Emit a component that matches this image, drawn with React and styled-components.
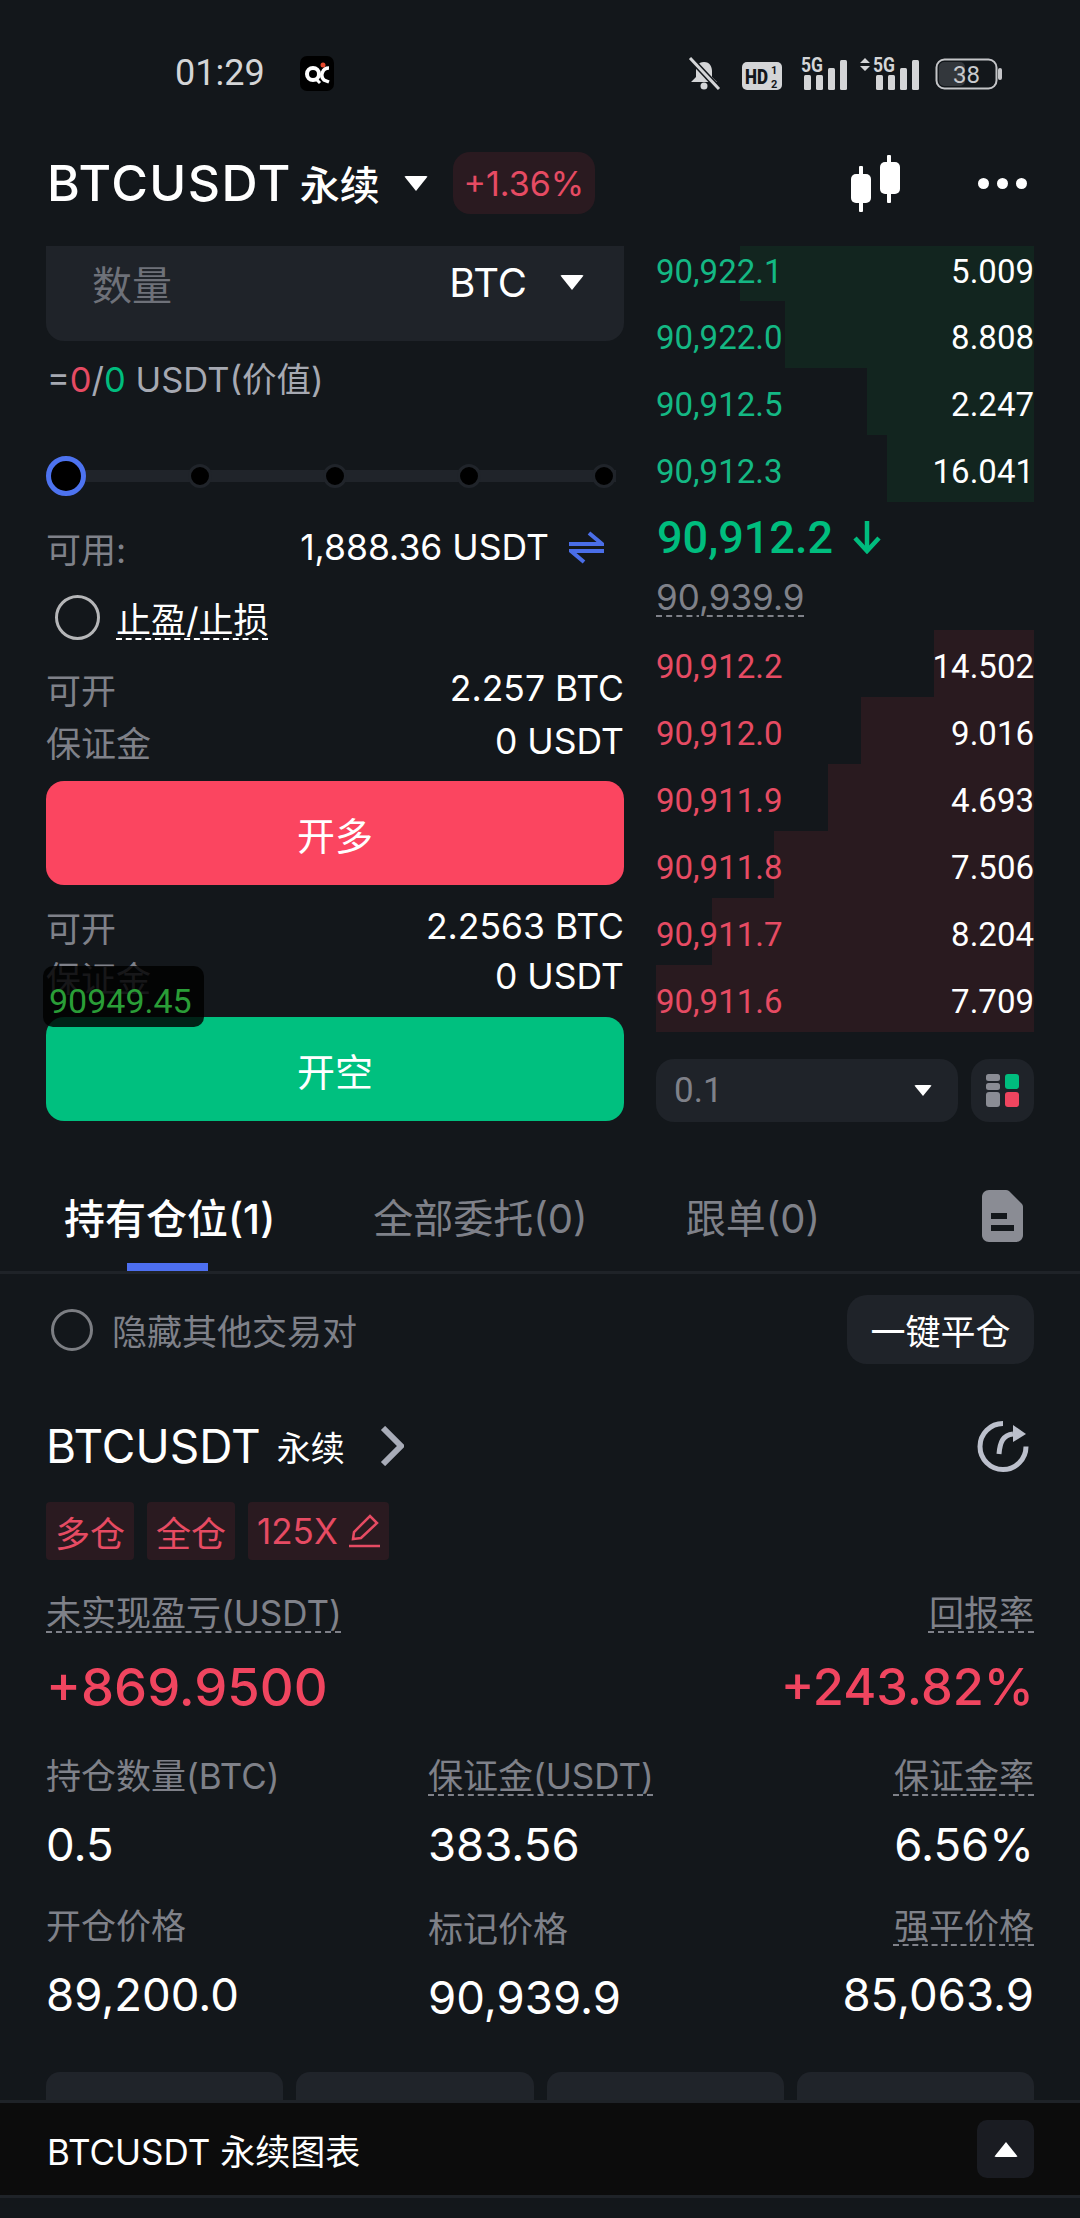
import React from "react";
import styled, { createGlobalStyle } from "styled-components";

const RED = "#f0455f";
const BOOK_RED = "#e64b63";
const GREEN = "#00bd7e";
const GREY = "#7f8189";
const PANEL = "#1f2329";
const BG = "#13171b";

const asks = [
  { price: "90,922.1", qty: "5.009", left: 84 },
  { price: "90,922.0", qty: "8.808", left: 129 },
  { price: "90,912.5", qty: "2.247", left: 211 },
  { price: "90,912.3", qty: "16.041", left: 231 },
];

const bids = [
  { price: "90,912.2", qty: "14.502", left: 278 },
  { price: "90,912.0", qty: "9.016", left: 205 },
  { price: "90,911.9", qty: "4.693", left: 172 },
  { price: "90,911.8", qty: "7.506", left: 118 },
  { price: "90,911.7", qty: "8.204", left: 56 },
  { price: "90,911.6", qty: "7.709", left: 0 },
];

const metrics = [
  [
    { label: "持仓数量(BTC)", value: "0.5" },
    { label: "保证金(USDT)", value: "383.56", dashed: true },
    { label: "保证金率", value: "6.56%", dashed: true },
  ],
  [
    { label: "开仓价格", value: "89,200.0" },
    { label: "标记价格", value: "90,939.9", low: true },
    { label: "强平价格", value: "85,063.9", dashed: true },
  ],
];

const GlobalStyle = createGlobalStyle`
  html, body {
    margin: 0;
    padding: 0;
    background: ${BG};
  }
  * {
    box-sizing: border-box;
  }
  body {
    font-family: Inter, "Noto Sans CJK SC", sans-serif;
  }
`;

const Page = styled.div`
  width: 1080px;
  height: 2218px;
  background: ${BG};
  color: #fff;
  display: flex;
  flex-direction: column;
  overflow: hidden;
`;

const Content = styled.div`
  flex: 1;
  min-height: 0;
  overflow: hidden;
`;

const StatusBar = styled.div`
  height: 146px;
  padding: 0 78px 0 175px;
  display: flex;
  align-items: center;
`;

const Clock = styled.span`
  font-family: Roboto, sans-serif;
  font-size: 36px;
  color: #d4d5d7;
  width: 125px;
`;

const StatusIcons = styled.div`
  margin-left: auto;
  display: flex;
  align-items: flex-end;
  height: 33px;
`;

const StatusIcon = styled.svg`
  display: block;
  margin-left: ${(p) => p.$gap}px;
`;

const Header = styled.div`
  height: 74px;
  margin-bottom: 26px;
  padding: 0 53px 0 47px;
  display: flex;
  align-items: center;
`;

const Symbol = styled.span`
  font-size: 50px;
  font-weight: 500;
  letter-spacing: 1.5px;
`;

const SymbolKind = styled.span`
  font-size: 40px;
  font-weight: 500;
  margin-left: 8px;
`;

const Caret = styled.span`
  display: inline-block;
  width: 0;
  height: 0;
  border-left: ${(p) => p.$size}px solid transparent;
  border-right: ${(p) => p.$size}px solid transparent;
  border-top: ${(p) => Math.round(p.$size * 1.25)}px solid #fff;
  border-radius: 2px;
`;

const HeaderCaret = styled(Caret)`
  margin-left: 24px;
`;

const ChangePill = styled.span`
  margin-left: 25px;
  width: 142px;
  height: 62px;
  border-radius: 17px;
  background: #2a1a20;
  color: ${BOOK_RED};
  font-size: 34px;
  display: flex;
  align-items: center;
  justify-content: center;
`;

const HeaderTools = styled.div`
  margin-left: auto;
  display: flex;
  align-items: center;
  gap: 76px;
`;

const Dots = styled.div`
  display: flex;
  gap: 8px;
`;

const Dot = styled.span`
  width: 11px;
  height: 11px;
  border-radius: 50%;
  background: #fff;
`;

const TradeArea = styled.div`
  padding: 0 46px;
  display: grid;
  grid-template-columns: 578px 378px;
  gap: 32px;
`;

const LeftCol = styled.div`
  display: flex;
  flex-direction: column;
`;

const QtyInput = styled.div`
  height: 95px;
  background: ${PANEL};
  border-radius: 0 0 18px 18px;
  padding: 0 40px 22px 46px;
  display: flex;
  align-items: center;
  justify-content: space-between;
`;

const QtyLabel = styled.span`
  font-size: 40px;
  color: #6e7179;
`;

const QtyUnit = styled.span`
  font-size: 40px;
  display: flex;
  align-items: center;
  gap: 33px;
`;

const ValueLine = styled.div`
  margin-top: 19px;
  height: 40px;
  padding-left: 1px;
  font-size: 34.5px;
  line-height: 40px;
  color: #a6a9b2;
`;

const Tinted = styled.span`
  color: ${(p) => p.$color};
`;

const SliderWrap = styled.div`
  margin-top: 56px;
  height: 40px;
  position: relative;
  display: flex;
  align-items: center;
  justify-content: space-between;
`;

const SliderTrack = styled.div`
  position: absolute;
  left: 20px;
  right: 8px;
  top: 14px;
  height: 12px;
  background: #20242a;
`;

const SliderThumb = styled.span`
  position: relative;
  width: 40px;
  height: 40px;
  border-radius: 50%;
  background: #000;
  border: 5px solid #4d73f0;
`;

const SliderStop = styled.span`
  position: relative;
  width: 24px;
  height: 24px;
  border-radius: 50%;
  background: #000;
  border: 3px solid #20242a;
`;

const SliderStops = styled.div`
  position: absolute;
  left: 142px;
  right: 8px;
  top: 8px;
  display: flex;
  justify-content: space-between;
`;

const AvailableRow = styled.div`
  margin-top: 29px;
  height: 44px;
  display: flex;
  align-items: center;
`;

const MutedLabel = styled.span`
  font-size: 35px;
  color: ${GREY};
`;

const AvailableValue = styled.span`
  margin-left: auto;
  font-size: 35.5px;
`;

const SwapIcon = styled.svg`
  margin: 0 20px 0 20px;
  flex: none;
`;

const StopRow = styled.div`
  margin-top: 26px;
  height: 45px;
  padding-left: 9px;
  display: flex;
  align-items: center;
  gap: 16px;
`;

const Radio = styled.span`
  width: ${(p) => p.$size}px;
  height: ${(p) => p.$size}px;
  border-radius: 50%;
  border: 3px solid ${(p) => p.$color};
  flex: none;
`;

const DashedText = styled.span`
  text-decoration: underline dashed;
  text-decoration-thickness: 2px;
  text-underline-offset: 5px;
`;

const StopLink = styled(DashedText)`
  font-size: 35px;
`;

const Summary = styled.div`
  position: relative;
  margin-top: ${(p) => p.$top}px;
`;

const SummaryRow = styled.div`
  height: ${(p) => p.$height}px;
  padding-bottom: 2px;
  display: flex;
  align-items: center;
  justify-content: space-between;
`;

const SummaryValue = styled.span`
  font-size: 35.5px;
`;

const PriceBadge = styled.div`
  position: absolute;
  left: -3px;
  top: 64px;
  width: 161px;
  height: 61px;
  padding: 0 0 6px 6px;
  border-radius: 10px;
  background: rgba(0, 0, 0, 0.82);
  color: #2a9d37;
  font-family: Roboto, sans-serif;
  font-size: 34px;
  display: flex;
  align-items: flex-end;
  z-index: 2;
`;

const ActionButton = styled.div`
  height: 104px;
  margin-top: ${(p) => p.$top}px;
  border-radius: 18px;
  background: ${(p) => p.$color};
  font-size: 38px;
  display: flex;
  align-items: center;
  justify-content: center;
`;

const RightCol = styled.div`
  display: flex;
  flex-direction: column;
  font-family: Roboto, sans-serif;
`;

const BookRow = styled.div`
  position: relative;
  height: ${(p) => (p.$clipped ? 55 : 67)}px;
  padding-top: ${(p) => (p.$clipped ? 0 : 6)}px;
  padding-bottom: ${(p) => (p.$clipped ? 5 : 0)}px;
  display: flex;
  align-items: center;
  justify-content: space-between;
  font-size: 33px;
`;

const BookFill = styled.div`
  position: absolute;
  top: 0;
  bottom: 0;
  right: 0;
  left: ${(p) => p.$left}px;
  background: ${(p) => p.$color};
`;

const BookPrice = styled.span`
  position: relative;
  color: ${(p) => p.$color};
`;

const BookQty = styled.span`
  position: relative;
`;

const LastPrice = styled.div`
  height: 70px;
  padding-left: 1px;
  display: flex;
  align-items: center;
  gap: 20px;
  font-size: 45px;
  font-weight: 500;
  color: ${GREEN};
`;

const MarkPrice = styled.div`
  height: 50px;
  margin-bottom: 8px;
  display: flex;
  align-items: center;
  font-family: Inter, sans-serif;
  font-size: 35px;
  color: ${GREY};
`;

const BookFooter = styled.div`
  margin-top: 27px;
  display: flex;
  gap: 13px;
`;

const StepSelect = styled.div`
  width: 302px;
  height: 63px;
  border-radius: 18px;
  background: ${PANEL};
  padding: 0 26px 0 18px;
  display: flex;
  align-items: center;
  justify-content: space-between;
  font-size: 35px;
  color: ${GREY};
`;

const DepthButton = styled.div`
  width: 63px;
  height: 63px;
  border-radius: 18px;
  background: ${PANEL};
  display: flex;
  align-items: center;
  justify-content: center;
`;

const TabBar = styled.div`
  height: 152px;
  padding: 62px 57px 0 64px;
  border-bottom: 3px solid #1f2328;
  display: flex;
  gap: 98px;
`;

const Tab = styled.div`
  position: relative;
  height: 87px;
  display: flex;
  align-items: center;
  padding-bottom: 24px;
  font-size: ${(p) => (p.$active ? 41 : 40)}px;
  font-weight: ${(p) => (p.$active ? 500 : 400)};
  color: ${(p) => (p.$active ? "#fff" : GREY)};
`;

const TabMark = styled.span`
  position: absolute;
  left: 63px;
  bottom: 0;
  width: 81px;
  height: 8px;
  background: #4d6ff0;
`;

const DocIcon = styled.svg`
  margin: 6px 0 0 auto;
`;

const Positions = styled.div`
  padding: 21px 46px 0;
`;

const HideRow = styled.div`
  height: 69px;
  display: flex;
  align-items: center;
  padding-left: 5px;
`;

const HideLabel = styled.span`
  margin-left: 19px;
  font-size: 35px;
  color: ${GREY};
`;

const CloseAll = styled.div`
  margin-left: auto;
  width: 187px;
  height: 69px;
  border-radius: 20px;
  background: ${PANEL};
  font-size: 35px;
  display: flex;
  align-items: center;
  justify-content: center;
`;

const PositionTitle = styled.div`
  margin-top: 52px;
  height: 60px;
  display: flex;
  align-items: center;
`;

const PositionSymbol = styled.span`
  font-size: 46px;
`;

const PositionKind = styled.span`
  margin-left: 16px;
  font-size: 34px;
`;

const Chevron = styled.svg`
  margin-left: 35px;
`;

const ShareIcon = styled.svg`
  margin: 0 5px 0 auto;
`;

const Tags = styled.div`
  margin-top: 26px;
  display: flex;
  gap: 13px;
`;

const Tag = styled.div`
  height: 58px;
  padding: 0 9px;
  border-radius: 4px;
  background: #2a1a20;
  color: ${BOOK_RED};
  font-size: 35px;
  display: flex;
  align-items: center;
  gap: 11px;
`;

const PnlRow = styled.div`
  margin-top: 33px;
  display: flex;
  justify-content: space-between;
`;

const PnlCell = styled.div`
  display: flex;
  flex-direction: column;
  align-items: ${(p) => (p.$right ? "flex-end" : "flex-start")};
  gap: 24px;
`;

const CellLabel = styled.span`
  font-size: 35px;
  line-height: 40px;
  color: ${GREY};
`;

const PnlValue = styled.span`
  font-size: ${(p) => p.$size}px;
  line-height: 60px;
  font-weight: 500;
  color: ${RED};
`;

const MetricGrid = styled.div`
  margin-top: ${(p) => p.$top}px;
  display: grid;
  grid-template-columns: 382px 1fr 1fr;
`;

const MetricCell = styled.div`
  padding-top: ${(p) => (p.$low ? 3 : 0)}px;
  display: flex;
  flex-direction: column;
  gap: 26px;
  align-items: ${(p) => (p.$right ? "flex-end" : "flex-start")};
`;

const MetricValue = styled.span`
  font-size: 45.5px;
  line-height: 46px;
`;

const QuickActions = styled.div`
  margin-top: 51px;
  display: grid;
  grid-template-columns: repeat(4, 1fr);
  gap: 13px;
`;

const QuickAction = styled.div`
  height: 60px;
  border-radius: 14px;
  background: #20242a;
`;

const ChartBar = styled.div`
  height: 95px;
  flex: none;
  background: #0c0c0c;
  border-top: 3px solid #1f2328;
  padding: 0 46px 0 47px;
  display: flex;
  align-items: center;
  justify-content: space-between;
  font-size: 35px;
`;

const ChartToggle = styled.div`
  width: 57px;
  height: 58px;
  border-radius: 10px;
  background: #1a1c22;
  display: flex;
  align-items: center;
  justify-content: center;
`;

const UpCaret = styled(Caret)`
  border-top: none;
  border-bottom: 15px solid #fff;
`;

const NavEdge = styled.div`
  height: 23px;
  flex: none;
  background: ${BG};
  border-top: 3px solid #1f2328;
`;

function SignalIcon({ arrows, gap }) {
  const x = arrows ? 13 : 0;
  const w = arrows ? 59 : 47;
  return (
    <StatusIcon $gap={gap} width={w} height="41" viewBox={`0 -8 ${w} 41`} fill="#d4d5d7">
      {arrows && <path d="M5 1l5 5H0zM5 14l5-5H0z" />}
      <text x={x} y="15" fontSize="20" fontFamily="Roboto" fontWeight="700" textLength="22" lengthAdjust="spacingAndGlyphs">
        5G
      </text>
      <rect x={x + 3} y="18" width="7" height="15" rx="1.5" />
      <rect x={x + 15} y="18" width="7" height="15" rx="1.5" />
      <rect x={x + 27} y="11" width="7" height="22" rx="1.5" />
      <rect x={x + 39} y="3" width="7" height="30" rx="1.5" />
    </StatusIcon>
  );
}

function StatusRow() {
  return (
    <StatusBar>
      <Clock>01:29</Clock>
      <svg width="34" height="35" viewBox="0 0 34 35">
        <rect width="34" height="35" rx="7" fill="#000" />
        <circle cx="13" cy="18" r="6" fill="none" stroke="#fff" strokeWidth="4" />
        <path d="M16 23l4 4" stroke="#fff" strokeWidth="3" />
        <path d="M29 12a7 7 0 0 0-5 12l5 2" fill="none" stroke="#fff" strokeWidth="3.5" />
        <circle cx="23" cy="9" r="2.5" fill="#e5482d" />
      </svg>
      <StatusIcons>
        <StatusIcon $gap={0} width="33" height="33" viewBox="0 0 33 33" fill="none">
          <path d="M16 5c-6 0-8 5-8 9v6l-5 5h26l-5-5v-6c0-4-2-9-8-9z" fill="#d4d5d7" />
          <circle cx="16" cy="29" r="3.5" fill="#d4d5d7" />
          <path d="M2 1l29 31" stroke={BG} strokeWidth="6" />
          <path d="M2 1l29 31" stroke="#d4d5d7" strokeWidth="3" />
        </StatusIcon>
        <StatusIcon $gap={21} width="40" height="28" viewBox="0 0 40 28">
          <rect width="40" height="28" rx="5" fill="#d4d5d7" />
          <text x="3" y="22" fontSize="20" fontFamily="Roboto" fontWeight="900" fill={BG} textLength="23" lengthAdjust="spacingAndGlyphs">
            HD
          </text>
          <text x="29" y="12" fontSize="11" fontFamily="Roboto" fontWeight="700" fill={BG}>
            1
          </text>
          <text x="29" y="26" fontSize="11" fontFamily="Roboto" fontWeight="700" fill={BG}>
            2
          </text>
        </StatusIcon>
        <SignalIcon gap={19} />
        <SignalIcon arrows gap={12} />
        <StatusIcon $gap={16} width="67" height="32" viewBox="0 0 67 32" fill="none">
          <rect x="1.5" y="1.5" width="60" height="29" rx="8" stroke="#c4c5c8" strokeWidth="2" />
          <rect x="4" y="4" width="26" height="24" rx="5" fill="#33373c" />
          <rect x="63" y="10" width="4" height="12" rx="2" fill="#c4c5c8" />
          <text x="18" y="25" fontSize="24" fontFamily="Roboto" fill="#c9cacd">
            38
          </text>
        </StatusIcon>
      </StatusIcons>
    </StatusBar>
  );
}

function HeaderRow() {
  return (
    <Header>
      <Symbol>BTCUSDT</Symbol>
      <SymbolKind>永续</SymbolKind>
      <HeaderCaret $size={12} />
      <ChangePill>+1.36%</ChangePill>
      <HeaderTools>
        <svg width="53" height="57" viewBox="0 0 53 57" fill="#fff">
          <rect x="10" y="11" width="4" height="46" rx="1" />
          <rect x="2" y="19" width="20" height="29" rx="5" />
          <rect x="38" y="0" width="4" height="48" rx="1" />
          <rect x="31" y="7" width="20" height="32" rx="5" />
        </svg>
        <Dots>
          <Dot />
          <Dot />
          <Dot />
        </Dots>
      </HeaderTools>
    </Header>
  );
}

function OrderForm() {
  return (
    <LeftCol>
      <QtyInput>
        <QtyLabel>数量</QtyLabel>
        <QtyUnit>
          BTC
          <Caret $size={12} />
        </QtyUnit>
      </QtyInput>
      <ValueLine>
        =<Tinted $color={BOOK_RED}>0</Tinted>/<Tinted $color={GREEN}>0</Tinted> USDT(价值)
      </ValueLine>
      <SliderWrap>
        <SliderTrack />
        <SliderThumb />
        <SliderStops>
          <SliderStop />
          <SliderStop />
          <SliderStop />
          <SliderStop />
        </SliderStops>
      </SliderWrap>
      <AvailableRow>
        <MutedLabel>可用:</MutedLabel>
        <AvailableValue>1,888.36 USDT</AvailableValue>
        <SwapIcon width="35" height="33" viewBox="0 0 35 33" fill="none" stroke="#4a6ee8" strokeWidth="4">
          <path d="M0 13h33L20 2" />
          <path d="M35 20H2l13 11" />
        </SwapIcon>
      </AvailableRow>
      <StopRow>
        <Radio $size={45} $color="#b5b6b8" />
        <StopLink>止盈/止损</StopLink>
      </StopRow>
      <Summary $top={23}>
        <SummaryRow $height={53}>
          <MutedLabel>可开</MutedLabel>
          <SummaryValue>2.257 BTC</SummaryValue>
        </SummaryRow>
        <SummaryRow $height={53}>
          <MutedLabel>保证金</MutedLabel>
          <SummaryValue>0 USDT</SummaryValue>
        </SummaryRow>
      </Summary>
      <ActionButton $top={12} $color="#fb4560">
        开多
      </ActionButton>
      <Summary $top={17}>
        <SummaryRow $height={50}>
          <MutedLabel>可开</MutedLabel>
          <SummaryValue>2.2563 BTC</SummaryValue>
        </SummaryRow>
        <SummaryRow $height={50}>
          <MutedLabel>保证金</MutedLabel>
          <SummaryValue>0 USDT</SummaryValue>
        </SummaryRow>
        <PriceBadge>90949.45</PriceBadge>
      </Summary>
      <ActionButton $top={15} $color="#00c07f">
        开空
      </ActionButton>
    </LeftCol>
  );
}

function OrderBook() {
  return (
    <RightCol>
      {asks.map((row, i) => (
        <BookRow key={row.price} $clipped={i === 0}>
          <BookFill $left={row.left} $color="#12251f" />
          <BookPrice $color="#14b884">{row.price}</BookPrice>
          <BookQty>{row.qty}</BookQty>
        </BookRow>
      ))}
      <LastPrice>
        90,912.2
        <svg width="28" height="34" viewBox="0 0 28 34" fill="none" stroke={GREEN} strokeWidth="4.5">
          <path d="M14 1v30" />
          <path d="M2 18l12 13 12-13" />
        </svg>
      </LastPrice>
      <MarkPrice>
        <DashedText>90,939.9</DashedText>
      </MarkPrice>
      {bids.map((row) => (
        <BookRow key={row.price}>
          <BookFill $left={row.left} $color="#291a1f" />
          <BookPrice $color={BOOK_RED}>{row.price}</BookPrice>
          <BookQty>{row.qty}</BookQty>
        </BookRow>
      ))}
      <BookFooter>
        <StepSelect>
          0.1
          <Caret $size={9} />
        </StepSelect>
        <DepthButton>
          <svg width="33" height="33" viewBox="0 0 33 33">
            <rect x="0" y="0" width="14" height="7" rx="2.5" fill="#8a8c94" />
            <rect x="0" y="9" width="14" height="7" rx="2.5" fill="#8a8c94" />
            <rect x="0" y="18" width="14" height="15" rx="3" fill="#8a8c94" />
            <rect x="19" y="0" width="14" height="15" rx="3" fill={GREEN} />
            <rect x="19" y="18" width="14" height="15" rx="3" fill={RED} />
          </svg>
        </DepthButton>
      </BookFooter>
    </RightCol>
  );
}

function PositionPanel() {
  return (
    <Positions>
      <HideRow>
        <Radio $size={42} $color="#7c7e83" />
        <HideLabel>隐藏其他交易对</HideLabel>
        <CloseAll>一键平仓</CloseAll>
      </HideRow>
      <PositionTitle>
        <PositionSymbol>BTCUSDT</PositionSymbol>
        <PositionKind>永续</PositionKind>
        <Chevron width="24" height="40" viewBox="0 0 24 40" fill="none" stroke="#a8acb8" strokeWidth="6">
          <path d="M3 2l18 18L3 38" />
        </Chevron>
        <ShareIcon width="52" height="52" viewBox="0 0 52 52" fill="none" stroke="#bcc0cc" strokeWidth="5">
          <path d="M26 3.5a23 23 0 1 0 23 23" />
          <path d="M22 34c1-12 4-19 14-20" />
          <path d="M36 5l13 9-13 8z" fill="#bcc0cc" stroke="none" />
        </ShareIcon>
      </PositionTitle>
      <Tags>
        <Tag>多仓</Tag>
        <Tag>全仓</Tag>
        <Tag>
          125X
          <svg width="31" height="34" viewBox="0 0 31 34" fill="none" stroke={BOOK_RED} strokeWidth="2.5">
            <path d="M4 25l1-7L21 2l7 7-16 15z" />
            <path d="M0 32h31" />
          </svg>
        </Tag>
      </Tags>
      <PnlRow>
        <PnlCell>
          <CellLabel>
            <DashedText>未实现盈亏(USDT)</DashedText>
          </CellLabel>
          <PnlValue $size={52.5}>+869.9500</PnlValue>
        </PnlCell>
        <PnlCell $right>
          <CellLabel>
            <DashedText>回报率</DashedText>
          </CellLabel>
          <PnlValue $size={50.5}>+243.82%</PnlValue>
        </PnlCell>
      </PnlRow>
      {metrics.map((row, r) => (
        <MetricGrid key={r} $top={r === 0 ? 39 : 38}>
          {row.map((cell, c) => (
            <MetricCell key={cell.label} $right={c === 2} $low={cell.low}>
              <CellLabel>{cell.dashed ? <DashedText>{cell.label}</DashedText> : cell.label}</CellLabel>
              <MetricValue>{cell.value}</MetricValue>
            </MetricCell>
          ))}
        </MetricGrid>
      ))}
      <QuickActions>
        <QuickAction />
        <QuickAction />
        <QuickAction />
        <QuickAction />
      </QuickActions>
    </Positions>
  );
}

export default function App() {
  return (
    <Page>
      <GlobalStyle />
      <Content>
        <StatusRow />
        <HeaderRow />
        <TradeArea>
          <OrderForm />
          <OrderBook />
        </TradeArea>
        <TabBar>
          <Tab $active>
            持有仓位(1)
            <TabMark />
          </Tab>
          <Tab>全部委托(0)</Tab>
          <Tab>跟单(0)</Tab>
          <DocIcon width="41" height="52" viewBox="0 0 41 52">
            <path
              d="M7 0h17c1 0 2 .4 3 1l13 13c.7.8 1 2 1 3v28c0 4-3 7-7 7H7c-4 0-7-3-7-7V7c0-4 3-7 7-7z"
              fill="#8a8c94"
            />
            <rect x="9" y="23" width="16" height="6" fill={BG} />
            <rect x="9" y="35" width="23" height="6" fill={BG} />
          </DocIcon>
        </TabBar>
        <PositionPanel />
      </Content>
      <ChartBar>
        BTCUSDT 永续图表
        <ChartToggle>
          <UpCaret $size={12} />
        </ChartToggle>
      </ChartBar>
      <NavEdge />
    </Page>
  );
}
